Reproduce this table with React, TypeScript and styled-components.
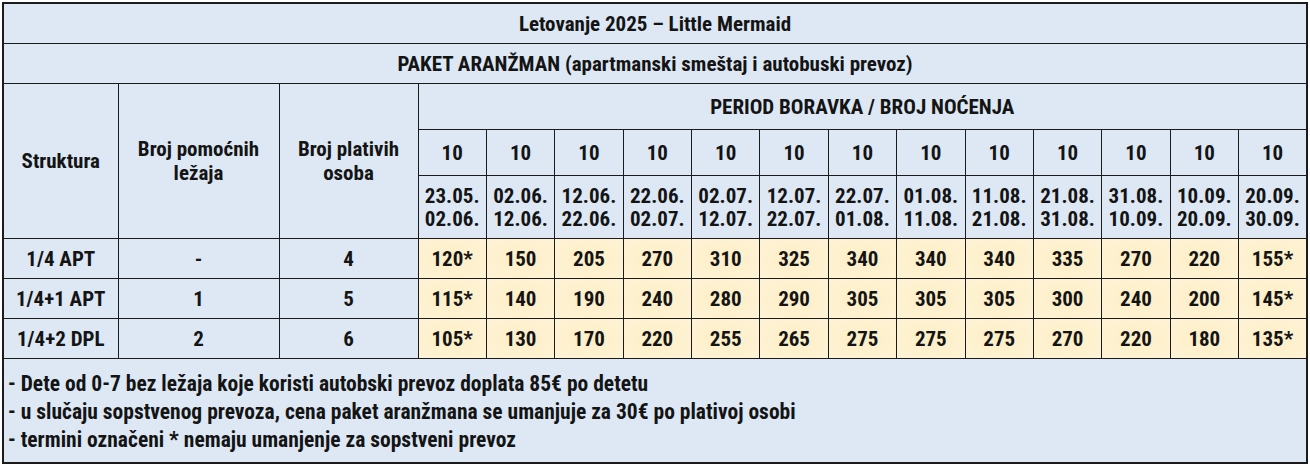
import styled, { createGlobalStyle } from "styled-components";

const GlobalStyle = createGlobalStyle`
  body {
    margin: 0;
    background: #ffffff;
  }
`;

const periods = [
  ["23.05.", "02.06."],
  ["02.06.", "12.06."],
  ["12.06.", "22.06."],
  ["22.06.", "02.07."],
  ["02.07.", "12.07."],
  ["12.07.", "22.07."],
  ["22.07.", "01.08."],
  ["01.08.", "11.08."],
  ["11.08.", "21.08."],
  ["21.08.", "31.08."],
  ["31.08.", "10.09."],
  ["10.09.", "20.09."],
  ["20.09.", "30.09."],
];

const rows = [
  { name: "1/4 APT", extra: "-", paying: "4", prices: ["120*", "150", "205", "270", "310", "325", "340", "340", "340", "335", "270", "220", "155*"] },
  { name: "1/4+1 APT", extra: "1", paying: "5", prices: ["115*", "140", "190", "240", "280", "290", "305", "305", "305", "300", "240", "200", "145*"] },
  { name: "1/4+2 DPL", extra: "2", paying: "6", prices: ["105*", "130", "170", "220", "255", "265", "275", "275", "275", "270", "220", "180", "135*"] },
];

const notes = [
  "- Dete od 0-7 bez ležaja koje koristi autobski prevoz doplata 85€ po detetu",
  "- u slučaju sopstvenog prevoza, cena paket aranžmana se umanjuje za 30€ po plativoj osobi",
  "- termini označeni * nemaju umanjenje za sopstveni prevoz",
];

export default function App() {
  return (
    <>
      <GlobalStyle />
      <Page>
        <PriceTable>
          <colgroup>
            <col style={{ width: 115 }} />
            <col style={{ width: 161 }} />
            <col style={{ width: 139 }} />
            {periods.map((_, i) => (
              <col key={i} />
            ))}
          </colgroup>
          <tbody>
            <tr>
              <TitleCell colSpan={16} $height={40}>
                Letovanje 2025 – Little Mermaid
              </TitleCell>
            </tr>
            <tr>
              <TitleCell colSpan={16} $height={40}>
                PAKET ARANŽMAN (apartmanski smeštaj i autobuski prevoz)
              </TitleCell>
            </tr>
            <tr>
              <HeadCell rowSpan={3}>Struktura</HeadCell>
              <HeadCell rowSpan={3}>
                Broj pomoćnih
                <br />
                ležaja
              </HeadCell>
              <HeadCell rowSpan={3}>
                Broj plativih
                <br />
                osoba
              </HeadCell>
              <TitleCell colSpan={13} $height={46}>
                PERIOD BORAVKA / BROJ NOĆENJA
              </TitleCell>
            </tr>
            <tr>
              {periods.map((_, i) => (
                <NightsCell key={i}>10</NightsCell>
              ))}
            </tr>
            <tr>
              {periods.map(([from, to], i) => (
                <DateCell key={i}>
                  {from}
                  <br />
                  {to}
                </DateCell>
              ))}
            </tr>
            {rows.map((row) => (
              <tr key={row.name}>
                <HeadCell>{row.name}</HeadCell>
                <HeadCell>{row.extra}</HeadCell>
                <HeadCell>{row.paying}</HeadCell>
                {row.prices.map((p, i) => (
                  <PriceCell key={i}>{p}</PriceCell>
                ))}
              </tr>
            ))}
            <tr>
              <NoteCell colSpan={16}>
                {notes.map((n) => (
                  <NoteLine key={n}>{n}</NoteLine>
                ))}
              </NoteCell>
            </tr>
          </tbody>
        </PriceTable>
      </Page>
    </>
  );
}

const Page = styled.div`
  padding: 2px 0 0 2px;
  width: 1310px;
  height: 464px;
  box-sizing: border-box;
  background: #ffffff;
`;

const PriceTable = styled.table`
  width: 1306px;
  border-collapse: collapse;
  table-layout: fixed;
  border: 2px solid #1b1b1b;
  font-family: Roboto, "DejaVu Sans", sans-serif;
  font-stretch: condensed;
  font-weight: 700;
  color: #141414;
  background: #dde8f4;
`;

const Cell = styled.td`
  border: 1px solid #1b1b1b;
  text-align: center;
  vertical-align: middle;
  padding: 0;
  font-size: 21px;
  line-height: 24px;
`;

const TitleCell = styled(Cell)<{ $height: number }>`
  height: ${(p) => p.$height - 1}px;
`;

const HeadCell = styled(Cell)`
  height: 39px;
`;

const NightsCell = styled(Cell)`
  height: 45px;
`;

const DateCell = styled(Cell)`
  height: 60px;
  line-height: 23px;
  padding-top: 2px;
`;

const PriceCell = styled(Cell)`
  height: 39px;
  background: radial-gradient(ellipse at center, #fdeec6 0%, #fef3d6 100%);
`;

const NoteCell = styled(Cell)`
  text-align: left;
  vertical-align: top;
  padding: 11px 0 0 4px;
  height: 92px;
  font-size: 21.5px;
`;

const NoteLine = styled.div`
  line-height: 28px;
  height: 28px;
`;
